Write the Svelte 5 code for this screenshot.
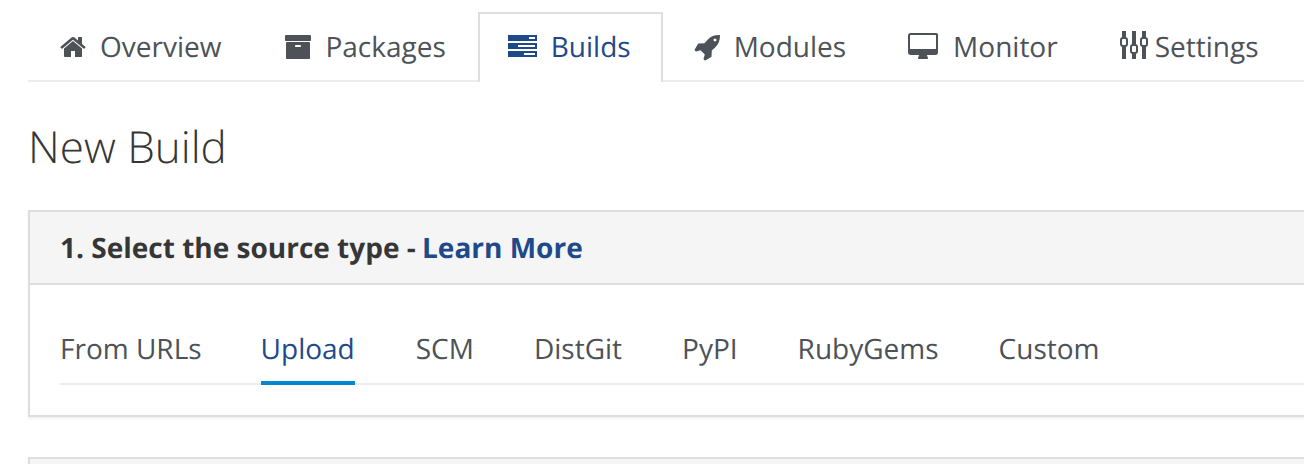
<script>
  const tabs = [
    { label: "Overview", icon: "home" },
    { label: "Packages", icon: "archive" },
    { label: "Builds", icon: "build", active: true },
    { label: "Modules", icon: "rocket" },
    { label: "Monitor", icon: "desktop" },
    { label: "Settings", icon: "sliders" },
  ];
  const sources = ["From URLs", "Upload", "SCM", "DistGit", "PyPI", "RubyGems", "Custom"];
</script>

<div class="page">
  <ul class="tabs">
    {#each tabs as tab}
      <li class="tab {tab.icon}" class:active={tab.active}>
        {#if tab.icon === "home"}
          <svg class="icon" width="28" height="28" viewBox="0 0 1792 1792" fill="currentColor"><path d="M1408 992v480q0 26-19 45t-45 19h-384v-384h-256v384h-384q-26 0-45-19t-19-45v-480q0-1 .5-3t.5-3l575-474 575 474q1 2 1 6zm223-69l-62 74q-8 9-21 11h-3q-13 0-21-7l-692-577-692 577q-12 8-24 7-13-2-21-11l-62-74q-8-10-7-23.5t11-21.5l719-599q32-26 76-26t76 26l244 204v-195q0-14 9-23t23-9h192q14 0 23 9t9 23v408l219 182q10 8 11 21.5t-7 23.5z" /></svg>
        {:else if tab.icon === "archive"}
          <svg class="icon" width="26" height="24" viewBox="64 128 1664 1536" fill="currentColor"><path d="M1088 832q0-26-19-45t-45-19h-256q-26 0-45 19t-19 45 19 45 45 19h256q26 0 45-19t19-45zm576-192v960q0 26-19 45t-45 19h-1408q-26 0-45-19t-19-45v-960q0-26 19-45t45-19h1408q26 0 45 19t19 45zm64-448v256q0 26-19 45t-45 19h-1536q-26 0-45-19t-19-45v-256q0-26 19-45t45-19h1536q26 0 45 19t19 45z" /></svg>
        {:else if tab.icon === "build"}
          <svg class="icon" width="29" height="22" viewBox="0 0 29 22" fill="currentColor"><path fill-rule="evenodd" d="M0 0h29v6H0zM21 2v2h6V2zM0 8h29v6H0zM10 10v2h17v-2zM0 16h29v6H0zM16 18v2h11v-2z" /></svg>
        {:else if tab.icon === "rocket"}
          <svg class="icon" width="28" height="28" viewBox="0 0 1792 1792" fill="currentColor"><path d="M1504 448q0-40-28-68t-68-28-68 28-28 68 28 68 68 28 68-28 28-68zm224-288q0 249-75.5 430.5t-253.5 360.5q-81 80-195 176l-20 379q-2 16-16 26l-384 224q-7 4-16 4-12 0-23-9l-64-64q-13-14-8-32l85-276-281-281-276 85q-3 1-9 1-14 0-23-9l-64-64q-17-19-5-39l224-384q10-14 26-16l379-20q96-114 176-195 188-187 358-258t431-71q14 0 23 9t9 23z" /></svg>
        {:else if tab.icon === "desktop"}
          <svg class="icon" width="30" height="26" viewBox="-64 0 1920 1664" fill="currentColor"><path d="M1728 992v-832q0-13-9.5-22.5t-22.5-9.5h-1600q-13 0-22.5 9.5t-9.5 22.5v832q0 13 9.5 22.5t22.5 9.5h1600q13 0 22.5-9.5t9.5-22.5zm128-832v1088q0 66-47 113t-113 47h-544q0 37 16 77.5t32 71 16 43.5q0 26-19 45t-45 19h-512q-26 0-45-19t-19-45q0-14 16-44t32-70 16-78h-544q-66 0-113-47t-47-113v-1088q0-66 47-113t113-47h1632q66 0 113 47t47 113z" /></svg>
        {:else}
          <svg class="icon" width="28" height="28" viewBox="0 0 28 28" fill="none" stroke="currentColor"><path stroke-width="4" d="M4 0v7M4 15v13M14 0v14M14 22v6M24 0v7M24 15v13" /><rect x="1" y="7" width="6" height="8" rx="2" stroke-width="2" /><rect x="11" y="14" width="6" height="8" rx="2" stroke-width="2" /><rect x="21" y="7" width="6" height="8" rx="2" stroke-width="2" /></svg>
        {/if}
        <span>{tab.label}</span>
      </li>
    {/each}
  </ul>

  <h1>New Build</h1>

  <section class="panel">
    <div class="panel-heading">1. Select the source type - <span class="link">Learn More</span></div>
    <div class="panel-body">
      <ul class="sources">
        {#each sources as source}
          <li class:current={source === "Upload"}>{source}</li>
        {/each}
      </ul>
    </div>
  </section>

  <section class="panel next"></section>
</div>

<style>
  :global(body) {
    margin: 0;
    overflow: hidden;
    background: #fff;
  }
  .page {
    font-family: "Open Sans", sans-serif;
    font-size: 28px;
    color: #4d5258;
    padding-left: 28px;
    height: 464px;
    overflow: hidden;
    text-rendering: geometricPrecision;
  }
  ul {
    list-style: none;
    margin: 0;
    padding: 0;
  }
  .tabs {
    display: flex;
    height: 82px;
    box-sizing: border-box;
    padding-top: 12px;
    border-bottom: 2px solid #ededed;
  }
  .tab {
    display: flex;
    align-items: center;
    gap: 14px;
    height: 70px;
    box-sizing: border-box;
    padding: 0 31px 3px;
    border: 2px solid transparent;
    border-bottom: 0;
    margin-right: -1px;
  }
  .tab.home {
    padding-left: 30px;
    gap: 12px;
    margin-right: -2px;
  }
  .tab.rocket {
    padding-left: 29px;
    gap: 13px;
    margin-right: -4px;
  }
  .tab.desktop {
    gap: 15px;
    margin-right: -4px;
  }
  .tab.sliders {
    gap: 7px;
  }
  .tab.sliders .icon {
    margin-bottom: 3px;
  }
  .tab.desktop .icon,
  .tab.build .icon {
    margin-bottom: 2px;
  }
  .tab.active {
    color: #1f4a8a;
    border-color: #dedede;
    background: #fff;
    padding-left: 28px;
    padding-right: 30px;
  }
  .icon {
    flex: none;
  }
  h1 {
    margin: 0;
    padding-top: 35px;
    font-size: 44px;
    line-height: 58px;
    font-weight: 300;
    color: #363636;
  }
  .panel {
    margin-top: 35px;
    margin-right: -40px;
    border: 2px solid #dedede;
    box-shadow: 0 2px 2px rgba(3, 3, 3, 0.05);
  }
  .panel-heading {
    height: 73px;
    box-sizing: border-box;
    padding: 1px 0 0 30px;
    display: flex;
    align-items: center;
    white-space: pre;
    background: #f5f5f5;
    border-bottom: 2px solid #dedede;
    font-weight: 700;
    color: #363636;
  }
  .link {
    color: #1f4a8a;
    margin-left: -1px;
  }
  .panel-body {
    padding: 29px 30px 30px;
  }
  .sources {
    display: flex;
    gap: 60px;
    height: 71px;
    border-bottom: 2px solid #ededed;
    box-sizing: border-box;
  }
  .sources li {
    height: 71px;
    box-sizing: border-box;
    line-height: 70px;
  }
  .sources .current {
    color: #1f4a8a;
    border-bottom: 4px solid #0088ce;
    margin: 0 1px 0 -1px;
  }
  .next {
    margin-top: 40px;
    height: 40px;
    background: #f5f5f5;
  }
</style>
